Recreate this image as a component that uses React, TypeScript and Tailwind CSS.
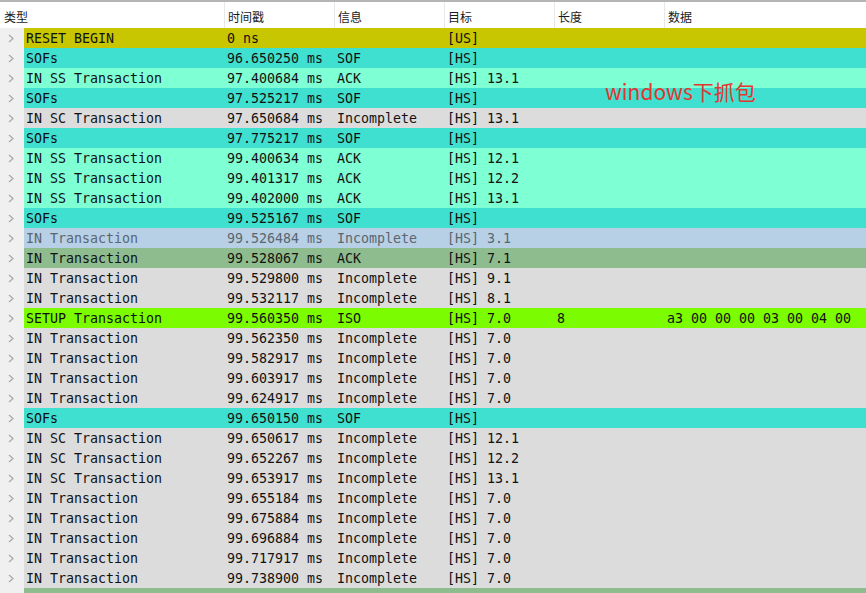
import React from "react";

type Row = { t: string; ts: string; info: string; tgt: string; len?: string; data?: string; bg: string; fg?: string };

const SOF = "bg-[#40e0d0]";
const SS = "bg-[#7fffd4]";
const GR = "bg-[#dcdcdc]";
const GREEN = "bg-[#8fbc8f]";

const rows: Row[] = [
  { t: "RESET BEGIN", ts: "0 ns", info: "", tgt: "[US]", bg: "bg-[#c8c600]" },
  { t: "SOFs", ts: "96.650250 ms", info: "SOF", tgt: "[HS]", bg: SOF },
  { t: "IN SS Transaction", ts: "97.400684 ms", info: "ACK", tgt: "[HS] 13.1", bg: SS },
  { t: "SOFs", ts: "97.525217 ms", info: "SOF", tgt: "[HS]", bg: SOF },
  { t: "IN SC Transaction", ts: "97.650684 ms", info: "Incomplete", tgt: "[HS] 13.1", bg: GR },
  { t: "SOFs", ts: "97.775217 ms", info: "SOF", tgt: "[HS]", bg: SOF },
  { t: "IN SS Transaction", ts: "99.400634 ms", info: "ACK", tgt: "[HS] 12.1", bg: SS },
  { t: "IN SS Transaction", ts: "99.401317 ms", info: "ACK", tgt: "[HS] 12.2", bg: SS },
  { t: "IN SS Transaction", ts: "99.402000 ms", info: "ACK", tgt: "[HS] 13.1", bg: SS },
  { t: "SOFs", ts: "99.525167 ms", info: "SOF", tgt: "[HS]", bg: SOF },
  { t: "IN Transaction", ts: "99.526484 ms", info: "Incomplete", tgt: "[HS] 3.1", bg: "bg-[#b8d0e6]", fg: "text-[#5a6670]" },
  { t: "IN Transaction", ts: "99.528067 ms", info: "ACK", tgt: "[HS] 7.1", bg: GREEN },
  { t: "IN Transaction", ts: "99.529800 ms", info: "Incomplete", tgt: "[HS] 9.1", bg: GR },
  { t: "IN Transaction", ts: "99.532117 ms", info: "Incomplete", tgt: "[HS] 8.1", bg: GR },
  { t: "SETUP Transaction", ts: "99.560350 ms", info: "ISO", tgt: "[HS] 7.0", len: "8", data: "a3 00 00 00 03 00 04 00", bg: "bg-[#7cfc00]" },
  { t: "IN Transaction", ts: "99.562350 ms", info: "Incomplete", tgt: "[HS] 7.0", bg: GR },
  { t: "IN Transaction", ts: "99.582917 ms", info: "Incomplete", tgt: "[HS] 7.0", bg: GR },
  { t: "IN Transaction", ts: "99.603917 ms", info: "Incomplete", tgt: "[HS] 7.0", bg: GR },
  { t: "IN Transaction", ts: "99.624917 ms", info: "Incomplete", tgt: "[HS] 7.0", bg: GR },
  { t: "SOFs", ts: "99.650150 ms", info: "SOF", tgt: "[HS]", bg: SOF },
  { t: "IN SC Transaction", ts: "99.650617 ms", info: "Incomplete", tgt: "[HS] 12.1", bg: GR },
  { t: "IN SC Transaction", ts: "99.652267 ms", info: "Incomplete", tgt: "[HS] 12.2", bg: GR },
  { t: "IN SC Transaction", ts: "99.653917 ms", info: "Incomplete", tgt: "[HS] 13.1", bg: GR },
  { t: "IN Transaction", ts: "99.655184 ms", info: "Incomplete", tgt: "[HS] 7.0", bg: GR },
  { t: "IN Transaction", ts: "99.675884 ms", info: "Incomplete", tgt: "[HS] 7.0", bg: GR },
  { t: "IN Transaction", ts: "99.696884 ms", info: "Incomplete", tgt: "[HS] 7.0", bg: GR },
  { t: "IN Transaction", ts: "99.717917 ms", info: "Incomplete", tgt: "[HS] 7.0", bg: GR },
  { t: "IN Transaction", ts: "99.738900 ms", info: "Incomplete", tgt: "[HS] 7.0", bg: GR },
];

const mono = { fontFamily: '"DejaVu Sans Mono", "Liberation Mono", monospace' };

function Chevron() {
  return (
    <svg width="6" height="9" viewBox="0 0 6 9" className="block">
      <polyline points="1,1 5,4.5 1,8" fill="none" stroke="#a8a8a8" strokeWidth="1.2" />
    </svg>
  );
}

export default function App() {
  const headers = ["类型", "时间戳", "信息", "目标", "长度", "数据"];
  return (
    <div className="relative w-[866px] h-[593px] overflow-hidden bg-[#f0f0f0]">
      <div className="h-[2px] bg-[#b4b4b4]" />
      <div
        className="grid grid-cols-[225px_110px_110px_110px_110px_1fr] h-[26px] bg-white text-[12px] text-[#1a1a1a]"
        style={{ fontFamily: '"Noto Sans CJK SC", "Noto Sans", sans-serif' }}
      >
        {headers.map((h, i) => (
          <div key={i} className={`flex items-center pt-[3px] ${i === 0 ? "pl-[4px]" : "pl-[3px]"} ${i < 5 ? "border-r border-[#e8e8e8]" : ""}`}>
            {h}
          </div>
        ))}
      </div>
      <div className="text-[13.3px] leading-[19px] text-[#111]" style={mono}>
        {rows.map((r, i) => (
          <div key={i} className="flex h-[20px]">
            <div className="w-[24px] shrink-0 flex items-center pl-[8px] pt-[1px] bg-[#f0f0f0]">
              <Chevron />
            </div>
            <div className={`flex-1 grid grid-cols-[201px_110px_110px_110px_110px_1fr] whitespace-pre pt-[1px] ${r.bg} ${r.fg ?? ""}`}>
              <div className="pl-[2px]">{r.t}</div>
              <div className="pl-[2px]">{r.ts}</div>
              <div className="pl-[2px]">{r.info}</div>
              <div className="pl-[2px]">{r.tgt}</div>
              <div className="pl-[2px]">{r.len ?? ""}</div>
              <div className="pl-[2px]">{r.data ?? ""}</div>
            </div>
          </div>
        ))}
        <div className="flex h-[20px]">
          <div className="w-[24px] shrink-0 bg-[#f0f0f0]" />
          <div className="flex-1 bg-[#8fbc8f]" />
        </div>
      </div>
      <div
        className="absolute left-[605px] top-[78px] text-[21px] leading-[26px] text-[#e2362f] whitespace-nowrap"
        style={{ fontFamily: '"Noto Sans CJK SC", "Noto Sans", sans-serif' }}
      >
        windows下抓包
      </div>
    </div>
  );
}
